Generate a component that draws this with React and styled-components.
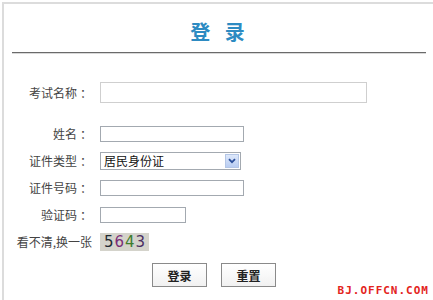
import React from 'react'
import styled, { createGlobalStyle } from 'styled-components'

const Global = createGlobalStyle`
  html, body { margin: 0; padding: 0; background: #fff; }
  body { font-family: "Noto Sans CJK SC", "Noto Sans", sans-serif; }
`

const Frame = styled.div`
  position: relative;
  margin: 2px 0 0 2px;
  height: 298px;
  box-sizing: border-box;
  border-left: 2px solid #dcdcdc;
  border-top: 2px solid #dcdcdc;
  overflow: hidden;
`

const Title = styled.h1`
  margin: 0;
  padding-top: 18px;
  height: 20px;
  line-height: 20px;
  text-align: center;
  font-size: 20px;
  font-weight: bold;
  color: #2d8bc2;
  letter-spacing: 5px;
  text-indent: 3px;
`

const Rule = styled.div`
  margin: 10px 7px 0 8px;
  height: 1px;
  background: #6a6a6a;
  border-bottom: 1px solid #d8d8d8;
`

const Form = styled.form`
  display: flex;
  flex-direction: column;
  padding-top: 25px;
`

const Row = styled.div`
  display: grid;
  grid-template-columns: 88px auto;
  column-gap: 8px;
  align-items: center;
  height: 27px;
  margin-bottom: ${p => p.$after || 0}px;
`

const Label = styled.label`
  text-align: right;
  font-size: 12px;
  color: #444;
  white-space: nowrap;
`

const Colon = styled.span`
  padding-left: 3px;
`

const Input = styled.input`
  box-sizing: border-box;
  width: ${p => p.$w}px;
  height: ${p => p.$h || 16}px;
  margin: 0;
  padding: 0 3px;
  border: 1px solid ${p => (p.$light ? '#cfcfcf' : '#a3a9b0')};
  background: #fff;
  outline: none;
`

const SelectBox = styled.div`
  box-sizing: border-box;
  width: 141px;
  height: 18px;
  display: flex;
  align-items: center;
  border: 1px solid #a3a9b0;
  padding: 1px;
  background: #fff;
`

const Select = styled.select`
  flex: 1;
  appearance: none;
  border: none;
  outline: none;
  background: transparent;
  font-family: "Noto Sans CJK SC", sans-serif;
  font-size: 12px;
  color: #111;
  padding: 0 2px;
  height: 14px;
  line-height: 14px;
`

const Arrow = styled.span`
  width: 14px;
  height: 14px;
  display: flex;
  align-items: center;
  justify-content: center;
  background: linear-gradient(#dde8fb, #b9cdf2);
  border: 1px solid #b4c6e6;
  box-sizing: border-box;
`

const Captcha = styled.div`
  width: 49px;
  height: 18px;
  display: flex;
  align-items: center;
  justify-content: center;
  gap: 1px;
  background: #d4d3cb;
  font-family: "DejaVu Sans", sans-serif;
  font-size: 15px;
  line-height: 18px;
`

const Digit = styled.span`
  color: ${p => p.$c};
`

const Buttons = styled.div`
  display: flex;
  gap: 14px;
  padding-left: 148px;
  margin-top: 8px;
`

const Button = styled.button`
  box-sizing: border-box;
  width: 55px;
  height: 24px;
  border: 1px solid #8a8a8a;
  background: linear-gradient(#ffffff, #f1f1f1);
  font-family: "Noto Sans CJK SC", sans-serif;
  font-size: 12px;
  font-weight: bold;
  color: #222;
  padding: 0;
`

const Mark = styled.div`
  position: absolute;
  right: 4px;
  bottom: 3px;
  font-family: "DejaVu Sans Mono", monospace;
  font-weight: bold;
  font-size: 11px;
  letter-spacing: 1px;
  color: #e3241d;
`

export default function App() {
  return (
    <>
      <Global />
      <Frame>
        <Title>登 录</Title>
        <Rule />
        <Form>
          <Row $after={14}>
            <Label>考试名称<Colon>：</Colon></Label>
            <Input $w={267} $h={21} $light />
          </Row>
          <Row>
            <Label>姓名<Colon>：</Colon></Label>
            <Input $w={144} />
          </Row>
          <Row>
            <Label>证件类型<Colon>：</Colon></Label>
            <SelectBox>
              <Select defaultValue="id">
                <option value="id">居民身份证</option>
              </Select>
              <Arrow>
                <svg width="8" height="6" viewBox="0 0 8 6">
                  <path d="M1 1.2 L4 4.2 L7 1.2" fill="none" stroke="#2b4f9a" strokeWidth="1.8" />
                </svg>
              </Arrow>
            </SelectBox>
          </Row>
          <Row>
            <Label>证件号码<Colon>：</Colon></Label>
            <Input $w={144} />
          </Row>
          <Row>
            <Label>验证码<Colon>：</Colon></Label>
            <Input $w={86} />
          </Row>
          <Row>
            <Label>看不清,换一张</Label>
            <Captcha>
              <Digit $c="#1f2a33">5</Digit>
              <Digit $c="#7b2d78">6</Digit>
              <Digit $c="#3f7d2c">4</Digit>
              <Digit $c="#4a2e63">3</Digit>
            </Captcha>
          </Row>
          <Buttons>
            <Button type="button">登录</Button>
            <Button type="reset">重置</Button>
          </Buttons>
        </Form>
        <Mark>BJ.OFFCN.COM</Mark>
      </Frame>
    </>
  )
}
